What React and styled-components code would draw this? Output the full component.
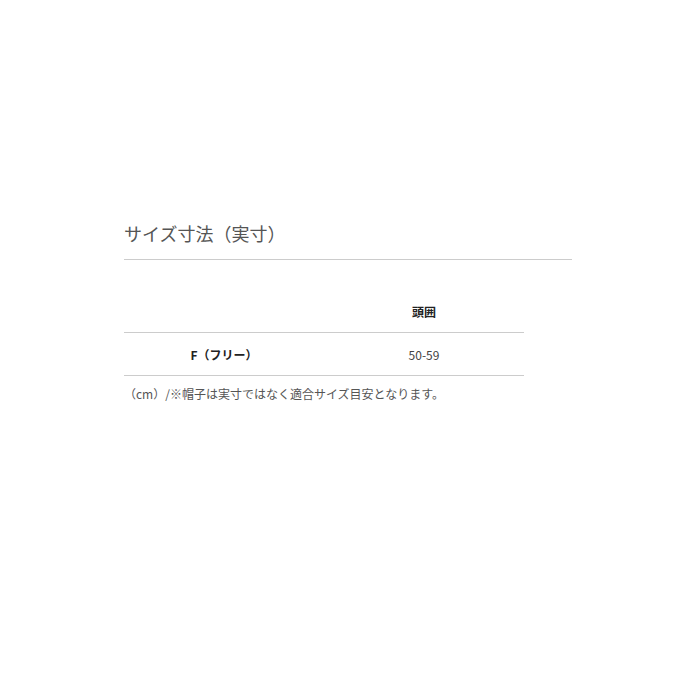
import React from "react";
import styled, { createGlobalStyle } from "styled-components";

const GlobalStyle = createGlobalStyle`
  body {
    margin: 0;
    background: #ffffff;
    font-family: "Noto Sans CJK JP", "Noto Sans", sans-serif;
    color: #333333;
  }
`;

const Page = styled.main`
  width: 680px;
  height: 680px;
  box-sizing: border-box;
  padding: 220px 0 0 124px;
`;

const Section = styled.section`
  width: 448px;
`;

const Title = styled.h2`
  margin: 0;
  padding-bottom: 12px;
  font-size: 18px;
  font-weight: 400;
  line-height: 27px;
  color: #555555;
  border-bottom: 1px solid #cccccc;
`;

const Table = styled.table`
  width: 400px;
  margin-top: 30px;
  border-collapse: collapse;
  table-layout: fixed;
`;

const Row = styled.tr`
  border-bottom: 1px solid #cccccc;
`;

const Cell = styled.td`
  width: 50%;
  height: 42px;
  padding: 0;
  text-align: center;
  vertical-align: middle;
  font-size: 12px;
  font-weight: ${({ bold }) => (bold ? 700 : 400)};
  color: ${({ bold }) => (bold ? "#222222" : "#444444")};
`;

const Note = styled.p`
  margin: 9px 0 0;
  font-size: 12px;
  line-height: 18px;
  color: #555555;
`;

const sizes = [{ name: "F（フリー）", head: "50-59" }];

const App = () => {
  return (
    <>
      <GlobalStyle />
      <Page>
        <Section>
          <Title>サイズ寸法（実寸）</Title>
          <Table>
            <tbody>
              <Row>
                <Cell />
                <Cell bold>頭囲</Cell>
              </Row>
              {sizes.map((s) => (
                <Row key={s.name}>
                  <Cell bold>{s.name}</Cell>
                  <Cell>{s.head}</Cell>
                </Row>
              ))}
            </tbody>
          </Table>
          <Note>（cm）/※帽子は実寸ではなく適合サイズ目安となります。</Note>
        </Section>
      </Page>
    </>
  );
};

export default App;
